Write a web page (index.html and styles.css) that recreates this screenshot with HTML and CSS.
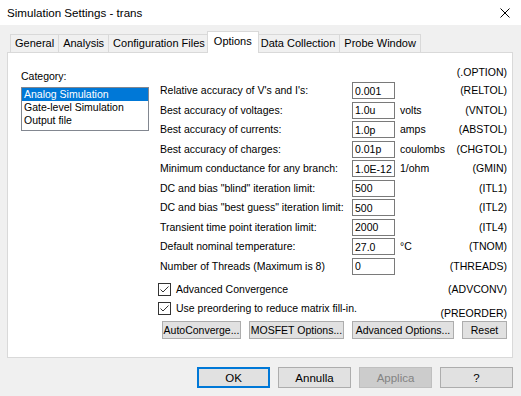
FILE: index.html
```html
<!DOCTYPE html>
<html lang="en">
  <head>
    <meta charset="UTF-8" />
    <meta name="viewport" content="width=device-width, initial-scale=1.0" />
    <title>Simulation Settings - trans</title>
    <link rel="stylesheet" href="styles.css">
  </head>
  <body>
    <div class="dialog">
      <div class="titlebar">
        <span class="title">Simulation Settings - trans</span>
        <svg class="close" width="10" height="10" viewBox="0 0 10 10">
          <path d="M0.5 0.5L9.5 9.5M9.5 0.5L0.5 9.5" stroke="#000" stroke-width="1" fill="none" />
        </svg>
      </div>

      <div class="tabs">
        <div class="tab">General</div>
        <div class="tab">Analysis</div>
        <div class="tab">Configuration Files</div>
        <div class="tab active">Options</div>
        <div class="tab">Data Collection</div>
        <div class="tab">Probe Window</div>
      </div>

      <div class="panel">
        <div class="category">
          <div class="category-label">Category:</div>
          <ul class="listbox">
            <li class="selected">Analog Simulation</li>
            <li>Gate-level Simulation</li>
            <li>Output file</li>
          </ul>
        </div>

        <div class="options">
          <div class="option-head">(.OPTION)</div>

          <div class="grid">
            <label>Relative accuracy of V's and I's:</label>
            <input type="text" value="0.001">
            <span class="unit"></span>
            <span class="code">(RELTOL)</span>

            <label>Best accuracy of voltages:</label>
            <input type="text" value="1.0u">
            <span class="unit">volts</span>
            <span class="code">(VNTOL)</span>

            <label>Best accuracy of currents:</label>
            <input type="text" value="1.0p">
            <span class="unit">amps</span>
            <span class="code">(ABSTOL)</span>

            <label>Best accuracy of charges:</label>
            <input type="text" value="0.01p">
            <span class="unit">coulombs</span>
            <span class="code">(CHGTOL)</span>

            <label>Minimum conductance for any branch:</label>
            <input type="text" value="1.0E-12">
            <span class="unit">1/ohm</span>
            <span class="code">(GMIN)</span>

            <label>DC and bias "blind" iteration limit:</label>
            <input type="text" value="500">
            <span class="unit"></span>
            <span class="code">(ITL1)</span>

            <label>DC and bias "best guess" iteration limit:</label>
            <input type="text" value="500">
            <span class="unit"></span>
            <span class="code">(ITL2)</span>

            <label>Transient time point iteration limit:</label>
            <input type="text" value="2000">
            <span class="unit"></span>
            <span class="code">(ITL4)</span>

            <label>Default nominal temperature:</label>
            <input type="text" value="27.0">
            <span class="unit">°C</span>
            <span class="code">(TNOM)</span>

            <label>Number of Threads (Maximum is 8)</label>
            <input type="text" value="0">
            <span class="unit"></span>
            <span class="code">(THREADS)</span>
          </div>

          <div class="checks">
            <div class="check-row">
              <span class="check">
                <svg width="11" height="11" viewBox="0 0 11 11">
                  <polyline points="1.5,5.5 4,8 9.5,2.5" stroke="#333" stroke-width="1" fill="none" />
                </svg>
              </span>
              <span class="check-label">Advanced Convergence</span>
              <span class="code">(ADVCONV)</span>
            </div>
            <div class="check-row">
              <span class="check">
                <svg width="11" height="11" viewBox="0 0 11 11">
                  <polyline points="1.5,5.5 4,8 9.5,2.5" stroke="#333" stroke-width="1" fill="none" />
                </svg>
              </span>
              <span class="check-label">Use preordering to reduce matrix fill-in.</span>
              <span class="code low">(PREORDER)</span>
            </div>
          </div>

          <div class="buttons">
            <button class="btn-auto">AutoConverge...</button>
            <button class="btn-mosfet">MOSFET Options...</button>
            <button class="btn-adv">Advanced Options...</button>
            <button class="btn-reset">Reset</button>
          </div>
        </div>
      </div>

      <div class="footer">
        <button class="dlg-btn default">OK</button>
        <button class="dlg-btn">Annulla</button>
        <button class="dlg-btn" disabled>Applica</button>
        <button class="dlg-btn">?</button>
      </div>
    </div>
  </body>
</html>
```

FILE: styles.css
```css
body {
  margin: 0;
  background: #f0f0f0;
  font-family: "Liberation Sans", Arial, sans-serif;
  font-size: 10.5px;
  color: #000;
}
.dialog {
  width: 521px;
  height: 396px;
  overflow: hidden;
}
.titlebar {
  height: 25px;
  background: #fff;
  display: flex;
  align-items: center;
  justify-content: space-between;
  padding: 0 11px 0 7px;
}
.title {
  font-size: 11.6px;
}
.tabs {
  display: flex;
  align-items: flex-end;
  height: 27px;
  padding-left: 11px;
  font-size: 11px;
}
.tab {
  height: 18px;
  line-height: 17px;
  padding: 0 4px;
  border: 1px solid #d9d9d9;
  border-bottom: none;
  margin-left: -1px;
  box-sizing: border-box;
  white-space: nowrap;
}
.tab.active {
  position: relative;
  z-index: 1;
  height: 22px;
  line-height: 19px;
  margin: 0 -2px -1px -3px;
  padding: 0 6px;
  background: #fff;
}
.panel {
  display: flex;
  height: 306px;
  box-sizing: border-box;
  margin: 0 8px 0 7px;
  background: #fff;
  border: 1px solid #d9d9d9;
}
.category {
  width: 152px;
  flex: none;
  padding: 17px 0 0 13px;
  box-sizing: border-box;
}
.category-label {
  line-height: 13px;
}
.listbox {
  margin: 4px 0 0;
  padding: 0;
  list-style: none;
  width: 128px;
  height: 44px;
  border: 1px solid #828790;
  box-sizing: border-box;
}
.listbox li {
  line-height: 13px;
  padding-left: 2px;
}
.listbox .selected {
  background: #0078d7;
  color: #fff;
}
.options {
  flex: 1;
  padding: 10px 5px 0 0;
}
.option-head {
  height: 19px;
  line-height: 19px;
  text-align: right;
}
.grid {
  display: grid;
  grid-template-columns: 192px 43px 1fr auto;
  grid-auto-rows: 19.5px;
}
.grid label,
.unit,
.grid .code {
  line-height: 17px;
  white-space: nowrap;
}
.grid .code {
  justify-self: end;
}
.unit {
  padding-left: 5px;
}
.grid input {
  width: 43px;
  height: 17px;
  box-sizing: border-box;
  border: 1px solid #7a7a7a;
  padding: 0 2px;
  margin: 0;
  font: inherit;
  color: #000;
  outline: none;
}
.checks {
  margin-top: 6px;
}
.check-row {
  display: flex;
  height: 19px;
}
.check {
  width: 13px;
  height: 13px;
  border: 1px solid #333;
  box-sizing: border-box;
  margin-left: -2px;
  background: #fff;
}
.check svg {
  display: block;
}
.check-label {
  flex: 1;
  line-height: 13px;
  margin-left: 5px;
}
.check-row .code {
  line-height: 13px;
}
.check-row .code.low {
  margin-top: 5px;
}
.buttons {
  display: flex;
  justify-content: space-between;
  padding-left: 2px;
}
.buttons button {
  height: 18px;
  padding: 0;
  background: #e1e1e1;
  border: 1px solid #adadad;
  font: inherit;
  color: #000;
  white-space: nowrap;
}
.btn-auto {
  width: 79px;
}
.btn-mosfet {
  width: 95px;
}
.btn-adv {
  width: 102px;
}
.btn-reset {
  width: 45px;
}
.footer {
  display: flex;
  justify-content: flex-end;
  gap: 8px;
  padding: 9px 8px 0 0;
}
.dlg-btn {
  width: 73px;
  height: 21px;
  padding: 0;
  background: #e1e1e1;
  border: 1px solid #adadad;
  font: inherit;
  font-size: 11.5px;
  color: #000;
}
.dlg-btn.default {
  border: 2px solid #0078d7;
}
.dlg-btn:disabled {
  background: #cccccc;
  border-color: #bfbfbf;
  color: #838383;
}
```
